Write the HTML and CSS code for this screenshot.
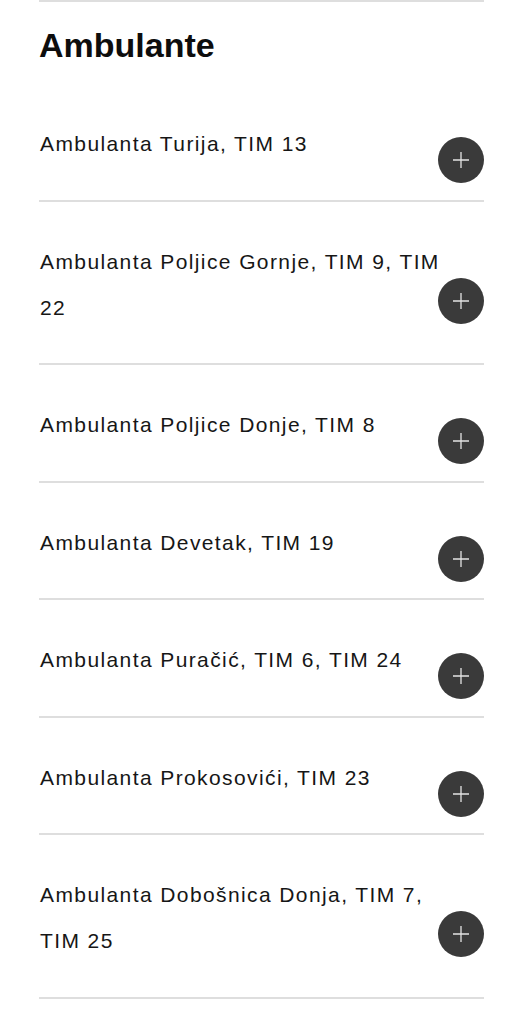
FILE: index.html
```html
<!DOCTYPE html>
<html lang="bs">
<head>
  <meta charset="UTF-8" />
  <title>Ambulante</title>
  <link rel="stylesheet" href="styles.css">
</head>
<body>

  <section class="clinics">
    <h2 class="clinics-title">Ambulante</h2>

    <ul class="clinic-list">
      <li class="clinic">
        <span class="clinic-name">Ambulanta Turija, TIM 13</span>
        <button class="clinic-toggle" aria-label="Otvori">
          <svg viewBox="0 0 16 16"><path d="M8 0v16M0 8h16" /></svg>
        </button>
      </li>
      <li class="clinic">
        <span class="clinic-name">Ambulanta Poljice Gornje, TIM 9, TIM 22</span>
        <button class="clinic-toggle" aria-label="Otvori">
          <svg viewBox="0 0 16 16"><path d="M8 0v16M0 8h16" /></svg>
        </button>
      </li>
      <li class="clinic">
        <span class="clinic-name">Ambulanta Poljice Donje, TIM 8</span>
        <button class="clinic-toggle" aria-label="Otvori">
          <svg viewBox="0 0 16 16"><path d="M8 0v16M0 8h16" /></svg>
        </button>
      </li>
      <li class="clinic">
        <span class="clinic-name">Ambulanta Devetak, TIM 19</span>
        <button class="clinic-toggle" aria-label="Otvori">
          <svg viewBox="0 0 16 16"><path d="M8 0v16M0 8h16" /></svg>
        </button>
      </li>
      <li class="clinic">
        <span class="clinic-name">Ambulanta Puračić, TIM 6, TIM 24</span>
        <button class="clinic-toggle" aria-label="Otvori">
          <svg viewBox="0 0 16 16"><path d="M8 0v16M0 8h16" /></svg>
        </button>
      </li>
      <li class="clinic">
        <span class="clinic-name">Ambulanta Prokosovići, TIM 23</span>
        <button class="clinic-toggle" aria-label="Otvori">
          <svg viewBox="0 0 16 16"><path d="M8 0v16M0 8h16" /></svg>
        </button>
      </li>
      <li class="clinic">
        <span class="clinic-name">Ambulanta Dobošnica Donja, TIM 7, TIM 25</span>
        <button class="clinic-toggle" aria-label="Otvori">
          <svg viewBox="0 0 16 16"><path d="M8 0v16M0 8h16" /></svg>
        </button>
      </li>
    </ul>
  </section>

</body>
</html>
```

FILE: styles.css
```css
body {
  margin: 0;
  background: #fff;
  font-family: "Liberation Sans", Arial, sans-serif;
  color: #161616;
}

.clinics {
  width: 445px;
  margin-left: 39px;
  border-top: 2px solid #dedede;
}

.clinics-title {
  margin: 24px 0 19px;
  font-size: 34px;
  line-height: 39px;
  font-weight: bold;
  color: #0d0d0d;
}

.clinic-list {
  list-style: none;
  margin: 0;
  padding: 0;
}

.clinic {
  display: flex;
  align-items: center;
  padding: 37px 0 32.5px;
  border-bottom: 2px solid #dedede;
}

.clinic-name {
  flex: 1;
  padding-left: 1px;
  font-size: 21px;
  line-height: 46px;
  letter-spacing: 1.4px;
}

.clinic-toggle {
  flex: none;
  width: 46px;
  height: 46px;
  margin-left: -10px;
  padding: 0;
  border: none;
  border-radius: 50%;
  background: #3a3a3a;
  color: #e4e4e4;
  display: flex;
  justify-content: center;
  align-items: center;
  transform: translateY(16px);
  cursor: pointer;
}

.clinic-toggle svg {
  width: 16px;
  height: 16px;
  stroke: currentColor;
  stroke-width: 1.3;
  fill: none;
}
```
